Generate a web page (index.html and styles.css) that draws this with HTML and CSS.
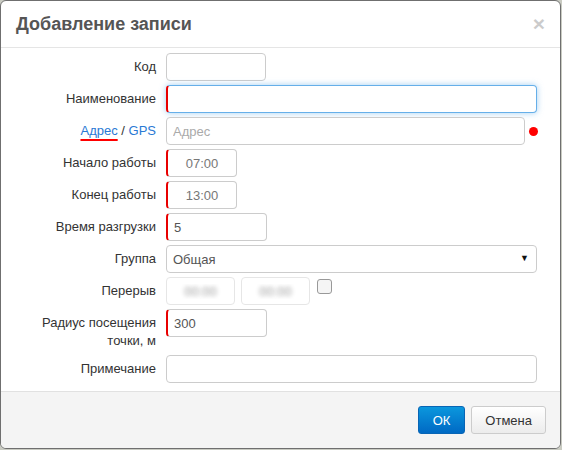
FILE: index.html
```html
<!DOCTYPE html>
<html lang="ru">
<head>
    <meta charset="UTF-8">
    <title>Добавление записи</title>
    <link rel="stylesheet" href="styles.css">
</head>
<body>
    <!-- Окно -->
    <div class="modal">
        <div class="modal-header">
            <h4 class="modal-title">Добавление записи</h4>
            <span class="close">×</span>
        </div>

        <div class="modal-body">
            <label class="lbl">Код</label>
            <div class="ctrl"><input class="field code" type="text"></div>

            <label class="lbl">Наименование</label>
            <div class="ctrl"><input class="field req focus" type="text"></div>

            <label class="lbl"><a class="link addr">Адрес</a> / <a class="link">GPS</a></label>
            <div class="ctrl row">
                <input class="field grow" type="text" placeholder="Адрес">
                <span class="dot"></span>
            </div>

            <label class="lbl">Начало работы</label>
            <div class="ctrl"><input class="field req time" type="text" value="07:00"></div>

            <label class="lbl">Конец работы</label>
            <div class="ctrl"><input class="field req time" type="text" value="13:00"></div>

            <label class="lbl">Время разгрузки</label>
            <div class="ctrl"><input class="field req w100" type="text" value="5"></div>

            <label class="lbl">Группа</label>
            <div class="ctrl select-wrap">
                <select class="field">
                    <option>Общая</option>
                </select>
                <span class="arrow">▼</span>
            </div>

            <label class="lbl">Перерыв</label>
            <div class="ctrl row break">
                <input class="field off" type="text" placeholder="00:00" disabled>
                <input class="field off" type="text" placeholder="00:00" disabled>
                <input class="check" type="checkbox">
            </div>

            <label class="lbl tall">Радиус посещения точки, м</label>
            <div class="ctrl"><input class="field req w100" type="text" value="300"></div>

            <label class="lbl">Примечание</label>
            <div class="ctrl"><input class="field" type="text"></div>
        </div>

        <div class="modal-footer">
            <button class="btn btn-primary">ОК</button>
            <button class="btn">Отмена</button>
        </div>
    </div>
</body>
</html>
```

FILE: styles.css
```css
/* Общие стили */
body {
    margin: 0;
    padding: 0;
    background-color: #c9cbc2;
    font-family: 'Liberation Sans', Arial, sans-serif;
    font-size: 13px;
    color: #333;
}

/* Окно */
.modal {
    width: 559px;
    background-color: #fff;
    border: 1px solid #6f6f6f;
    border-radius: 6px;
    overflow: hidden;
}

.modal-header {
    display: flex;
    justify-content: space-between;
    align-items: center;
    padding: 13px 15px;
    border-bottom: 1px solid #e5e5e5;
}

.modal-title {
    margin: 0;
    font-size: 18px;
    line-height: 20px;
    font-weight: bold;
    color: #555;
}

.close {
    font-size: 21px;
    line-height: 20px;
    font-weight: bold;
    color: #000;
    opacity: 0.2;
    cursor: pointer;
}

/* Форма */
.modal-body {
    display: grid;
    grid-template-columns: 140px 1fr;
    column-gap: 10px;
    row-gap: 4px;
    padding: 5px 23px 8px 15px;
}

.lbl {
    text-align: right;
    line-height: 18px;
    padding-top: 5px;
}

.lbl.tall {
    padding-bottom: 1px;
}

.link {
    color: #2a79d4;
    text-decoration: none;
}

.link.addr {
    text-decoration: underline;
    text-decoration-color: #f00;
    text-decoration-thickness: 2px;
    text-underline-offset: 4px;
}

.ctrl {
    display: flex;
    align-items: flex-start;
}

.row {
    align-items: center;
}

.field {
    box-sizing: border-box;
    width: 100%;
    height: 28px;
    padding: 0 6px;
    border: 1px solid #ccc;
    border-radius: 4px;
    background-color: #fff;
    font-family: inherit;
    font-size: 13px;
    color: #555;
    outline: none;
}

.field::placeholder {
    color: #aaa;
}

.code {
    width: 100px;
}

.w100 {
    width: 101px;
}

.grow {
    flex: 1;
}

/* Обязательное поле */
.req {
    border-left: 2px solid #e80000;
}

.focus {
    border-color: #66afe9;
    border-left-color: #e80000;
    box-shadow: 0 0 6px rgba(102, 175, 233, 0.6);
}

.time {
    width: 71px;
    text-align: center;
    color: #777;
}

.dot {
    width: 9px;
    height: 9px;
    margin-left: 4px;
    margin-right: -1px;
    border-radius: 50%;
    background-color: #f00;
}

/* Выпадающий список */
.select-wrap {
    position: relative;
}

.select-wrap select {
    appearance: none;
    -webkit-appearance: none;
}

.arrow {
    position: absolute;
    right: 8px;
    top: 8px;
    font-size: 9px;
    color: #111;
    pointer-events: none;
}

/* Перерыв */
.break {
    gap: 6px;
}

.off {
    width: 69px;
    border-color: #e6e6e6;
    text-align: center;
}

.off::placeholder {
    color: transparent;
    text-shadow: 0 0 4px #999;
}

.check {
    appearance: none;
    -webkit-appearance: none;
    box-sizing: border-box;
    width: 15px;
    height: 15px;
    margin: -9px 0 0 1px;
    border: 1px solid #999;
    border-radius: 3px;
    background-color: #f5f5f5;
}

/* Подвал */
.modal-footer {
    display: flex;
    justify-content: flex-end;
    gap: 6px;
    padding: 14px 14px 14px 15px;
    background-color: #f4f4f4;
    border-top: 1px solid #e1e1e1;
}

.btn {
    height: 28px;
    padding: 0 13px;
    border: 1px solid #ccc;
    border-radius: 3px;
    background: linear-gradient(#ffffff, #ececec);
    font-family: inherit;
    font-size: 13px;
    color: #333;
    cursor: pointer;
}

.btn-primary {
    padding: 0 14px;
    border-color: #0865b5;
    background: linear-gradient(#0b97dd, #0069c4);
    color: #fff;
}
```
